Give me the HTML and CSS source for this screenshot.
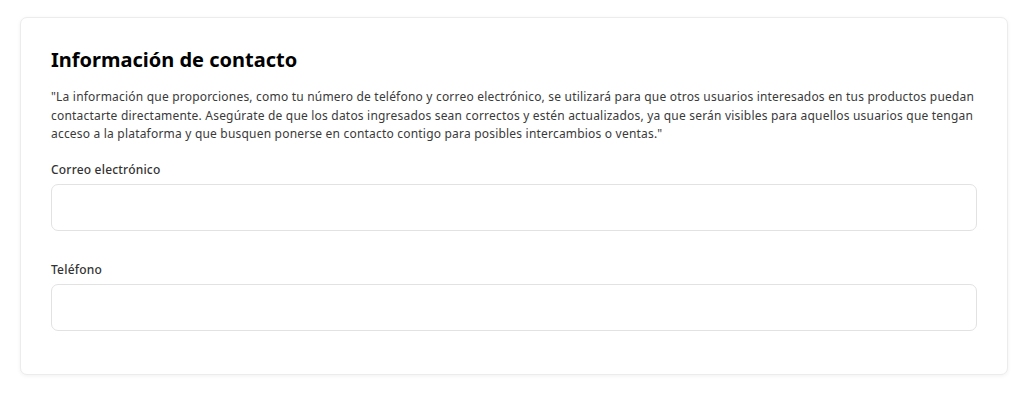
FILE: index.html
```html
<!DOCTYPE html>
<html lang="es">

<head>
  <meta charset="utf-8">
  <title>Información de contacto</title>
  <link rel="stylesheet" href="styles.css">
</head>

<body>
  <div class="page">
    <section class="contact-card">
      <h2 class="contact-title">Información de contacto</h2>
      <p class="contact-note">"La información que proporciones, como tu número de teléfono y correo electrónico, se utilizará para que otros usuarios interesados en tus productos puedan contactarte directamente. Asegúrate de que los datos ingresados sean correctos y estén actualizados, ya que serán visibles para aquellos usuarios que tengan acceso a la plataforma y que busquen ponerse en contacto contigo para posibles intercambios o ventas."</p>

      <div class="field">
        <label class="field-label" for="emailInput">Correo electrónico</label>
        <input class="field-input" type="email" id="emailInput">
      </div>

      <div class="field">
        <label class="field-label" for="phoneInput">Teléfono</label>
        <input class="field-input" type="tel" id="phoneInput">
      </div>
    </section>
  </div>
</body>

</html>
```

FILE: styles.css
```css
body {
  font-family: "Noto Sans", Arial, sans-serif;
  margin: 0;
  padding: 0;
  background-color: #fff;
  color: #333;
}

.page {
  padding: 17px 16px 20px 20px;
}

/* card */
.contact-card {
  background-color: #fff;
  border: 1px solid #ececec;
  border-radius: 7px;
  box-shadow: 0 1px 4px rgba(0, 0, 0, 0.06);
  padding: 28px 30px 43px 30px;
}

.contact-title {
  margin: 0;
  font-size: 20px;
  font-weight: 700;
  color: #000;
  line-height: 28px;
}

.contact-note {
  margin: 14px 0 17px 0;
  font-size: 12px;
  line-height: 18.5px;
  letter-spacing: 0.2px;
  color: #3a3a3a;
}

/* form fields */
.field {
  margin-bottom: 30px;
}

.field:last-child {
  margin-bottom: 0;
}

.field-label {
  display: block;
  font-size: 12px;
  font-weight: 500;
  letter-spacing: 0.2px;
  color: #333;
  margin-bottom: 5px;
  line-height: 18px;
}

.field-input {
  display: block;
  width: 100%;
  height: 47px;
  box-sizing: border-box;
  border: 1px solid #e2e2e2;
  border-radius: 7px;
  background: #fff;
  padding: 0 12px;
}
```
